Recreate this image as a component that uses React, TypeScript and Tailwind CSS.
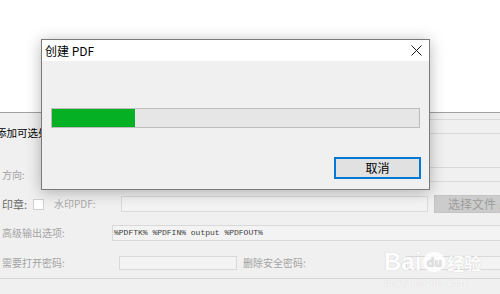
const cjk = { fontFamily: '"Microsoft YaHei", "Noto Sans CJK SC", "Noto Sans", sans-serif' };

function Box({ className = "" }: { className?: string }) {
  return <div className={"border border-[#d9d9d9] bg-[#f0f0f0] " + className} />;
}

function CloseIcon() {
  return (
    <svg width="11" height="11" viewBox="0 0 11 11" fill="none" stroke="#1a1a1a" strokeWidth="1">
      <path d="M0.5 0.5 L10.5 10.5 M10.5 0.5 L0.5 10.5" />
    </svg>
  );
}

function CreateDialog() {
  return (
    <div className="absolute left-[41px] top-[39px] w-[389px] h-[151px] border border-[#7a7a7a] bg-[#f0f0f0] shadow-[0_2px_14px_rgba(0,0,0,0.28)] flex flex-col">
      <div className="h-[21px] bg-white flex items-center justify-between pl-[3px] pr-[7px]">
        <span className="text-[12px] text-black leading-none">创建 PDF</span>
        <CloseIcon />
      </div>
      <div className="flex flex-col px-[9px] pt-[47px]">
        <div className="h-[20px] border border-[#bcbcbc] bg-[#e6e6e6] flex">
          <div className="h-full w-[83px] bg-[#06b025]" />
        </div>
        <button className="self-end mt-[29px] mr-[-1px] w-[87px] h-[22px] border-2 border-[#0078d7] bg-[#e1e1e1] text-[12px] text-black leading-none">
          取消
        </button>
      </div>
    </div>
  );
}

function Watermark() {
  return (
    <div className="absolute left-[384px] top-[250px] flex flex-col items-start opacity-90 pointer-events-none">
      <div className="flex items-center gap-[2px] [text-shadow:0_0_1px_#bdbdbd]">
        <span className="text-[24px] font-bold text-white leading-none" style={{ fontFamily: '"Liberation Sans", sans-serif' }}>
          Bai
        </span>
        <span className="w-[22px] h-[20px] rounded-[10px] bg-white text-[#dedede] text-[12px] font-bold flex items-center justify-center leading-none">
          du
        </span>
        <span className="text-[17px] font-bold text-white leading-none">经验</span>
      </div>
      <span className="mt-[3px] text-[11px] text-white leading-none [text-shadow:0_0_1px_#c8c8c8]" style={{ fontFamily: '"Liberation Serif", serif' }}>
        jingyan.baidu.com
      </span>
    </div>
  );
}

export default function App() {
  return (
    <div className="relative w-[500px] h-[294px] overflow-hidden bg-white" style={cjk}>
      <div className="h-[112px] bg-white" />
      <div className="bg-[#f0f0f0] border-t border-[#a0a0a0] h-[182px] flex flex-col">
        {/* tab row */}
        <div className="h-[42px] flex">
          <span className="shrink-0 mt-[12px] ml-[-4px] w-[116px] text-[10.5px] text-black leading-[16px] whitespace-nowrap">添加可选处</span>
          <Box className="flex-1 mt-[6px] h-[15px] mr-[-2px]" />
        </div>
        {/* 方向 */}
        <div className="h-[35px] flex">
          <span className="shrink-0 mt-[12px] ml-[2px] w-[110px] text-[10px] text-[#a3a3a3] leading-[16px]">方向:</span>
          <Box className="flex-1 mt-[12px] h-[15px] mr-[-2px]" />
        </div>
        {/* 印章 */}
        <div className="h-[28px] flex items-center">
          <span className="shrink-0 ml-[2px] w-[31px] text-[11px] text-[#6a6a6a] leading-none">印章:</span>
          <div className="shrink-0 w-[11px] h-[11px] border border-[#d0d0d0] bg-white" />
          <span className="shrink-0 ml-[10px] w-[67px] text-[10px] text-[#a8a8a8] leading-none">水印PDF:</span>
          <div className="shrink-0 w-[307px] h-[16px] border border-[#dadada] bg-[#f3f3f3]" />
          <div className="shrink-0 ml-[6px] w-[72px] h-[18px] border border-[#c4c4c4] bg-[#cccccc] text-[12px] text-[#9c9c9c] leading-none flex items-center pl-[13px] whitespace-nowrap">
            选择文件 ...
          </div>
        </div>
        {/* 高级输出选项 */}
        <div className="h-[30px] flex items-center">
          <span className="shrink-0 ml-[2px] w-[110px] text-[10px] text-[#a3a3a3] leading-none">高级输出选项:</span>
          <div className="flex-1 mr-[-2px] h-[16px] border border-[#d9d9d9] bg-[#f3f3f3] flex items-center pl-[1px]">
            <span className="text-[8px] text-[#3a3a3a] leading-none whitespace-nowrap" style={{ fontFamily: '"Liberation Mono", monospace' }}>
              %PDFTK% %PDFIN% output %PDFOUT%
            </span>
          </div>
        </div>
        {/* 密码 */}
        <div className="h-[31px] flex items-center border-b border-[#d6d6d6]">
          <span className="shrink-0 ml-[2px] w-[117px] text-[10px] text-[#a3a3a3] leading-none">需要打开密码:</span>
          <div className="shrink-0 w-[118px] h-[14px] border border-[#d9d9d9] bg-[#f3f3f3]" />
          <span className="shrink-0 ml-[6px] w-[163px] text-[10px] text-[#a3a3a3] leading-none">删除安全密码:</span>
          <div className="flex-1 mr-[-2px] h-[14px] border border-[#d9d9d9] bg-[#f3f3f3]" />
        </div>
      </div>
      <CreateDialog />
      <Watermark />
    </div>
  );
}
